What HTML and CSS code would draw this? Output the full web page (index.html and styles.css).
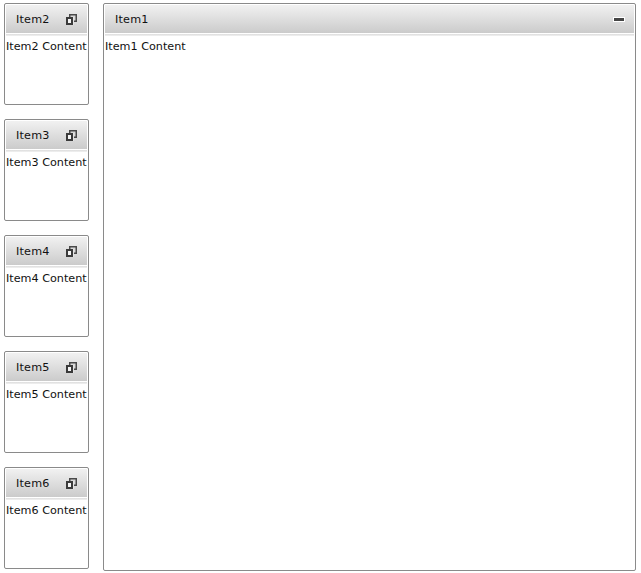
FILE: index.html
```html
<!DOCTYPE html>
<html lang="en">
<head>
<meta charset="utf-8">
<title>Tile view</title>
<link rel="stylesheet" href="styles.css">
</head>
<body>
<div class="layout">
  <div class="side">
    <section class="tile">
      <header class="head"><span class="title">Item2</span>
        <svg class="icon" width="11" height="11" viewBox="0 0 11 11"><rect class="back" x="3.750" y=".750" width="6.500" height="6.500"/><rect class="halo" x="0" y="3" width="8" height="8"/><rect class="front" x="1" y="4" width="5" height="6"/></svg>
      </header>
      <div class="rule"></div>
      <div class="body">Item2 Content</div>
    </section>
    <section class="tile">
      <header class="head"><span class="title">Item3</span>
        <svg class="icon" width="11" height="11" viewBox="0 0 11 11"><rect class="back" x="3.750" y=".750" width="6.500" height="6.500"/><rect class="halo" x="0" y="3" width="8" height="8"/><rect class="front" x="1" y="4" width="5" height="6"/></svg>
      </header>
      <div class="rule"></div>
      <div class="body">Item3 Content</div>
    </section>
    <section class="tile">
      <header class="head"><span class="title">Item4</span>
        <svg class="icon" width="11" height="11" viewBox="0 0 11 11"><rect class="back" x="3.750" y=".750" width="6.500" height="6.500"/><rect class="halo" x="0" y="3" width="8" height="8"/><rect class="front" x="1" y="4" width="5" height="6"/></svg>
      </header>
      <div class="rule"></div>
      <div class="body">Item4 Content</div>
    </section>
    <section class="tile">
      <header class="head"><span class="title">Item5</span>
        <svg class="icon" width="11" height="11" viewBox="0 0 11 11"><rect class="back" x="3.750" y=".750" width="6.500" height="6.500"/><rect class="halo" x="0" y="3" width="8" height="8"/><rect class="front" x="1" y="4" width="5" height="6"/></svg>
      </header>
      <div class="rule"></div>
      <div class="body">Item5 Content</div>
    </section>
    <section class="tile">
      <header class="head"><span class="title">Item6</span>
        <svg class="icon" width="11" height="11" viewBox="0 0 11 11"><rect class="back" x="3.750" y=".750" width="6.500" height="6.500"/><rect class="halo" x="0" y="3" width="8" height="8"/><rect class="front" x="1" y="4" width="5" height="6"/></svg>
      </header>
      <div class="rule"></div>
      <div class="body">Item6 Content</div>
    </section>
  </div>
  <section class="tile main">
    <header class="head"><span class="title">Item1</span><span class="minimize"></span></header>
    <div class="rule"></div>
    <div class="body">Item1 Content</div>
  </section>
</div>
</body>
</html>
```
FILE: styles.css
```css
html, body { margin: 0; padding: 0; background: #fff; }
body { font-family: "DejaVu Sans", sans-serif; font-size: 11.2px; color: #111; }
.layout { display: flex; align-items: flex-start; gap: 14px; padding: 3px 0 0 4px; width: 641px; height: 573px; box-sizing: border-box; overflow: hidden; }
.side { display: flex; flex-direction: column; gap: 14px; width: 85px; flex: none; }
.tile { box-sizing: border-box; height: 102px; border: 1px solid #8a8a8a; border-radius: 2px; padding: 1px; display: flex; flex-direction: column; background: #fff; }
.main { width: 533px; height: 568px; flex: none; }
.head { box-sizing: border-box; height: 28px; flex: none; display: flex; align-items: center; justify-content: space-between; padding: 1px 10px 0 10px; background: linear-gradient(#f1f1f1, #cbcbcb); }
.title { letter-spacing: 0.2px; }
.rule { height: 2px; margin-top: 1px; background: linear-gradient(#dcdcdc, #f2f2f2); flex: none; }
.main .head { padding-right: 9px; }
.body { padding: 4px 0 0 0; line-height: 14px; white-space: nowrap; }
.icon { flex: none; }
.back { fill: #d8d8d8; stroke: #4a4a4a; stroke-width: 1.5; }
.halo { fill: #e4e4e4; }
.front { fill: #f4f4f4; stroke: #3a3a3a; stroke-width: 2; }
.minimize { width: 10px; height: 3px; background: #444; border: 1px solid #fff; }
```
